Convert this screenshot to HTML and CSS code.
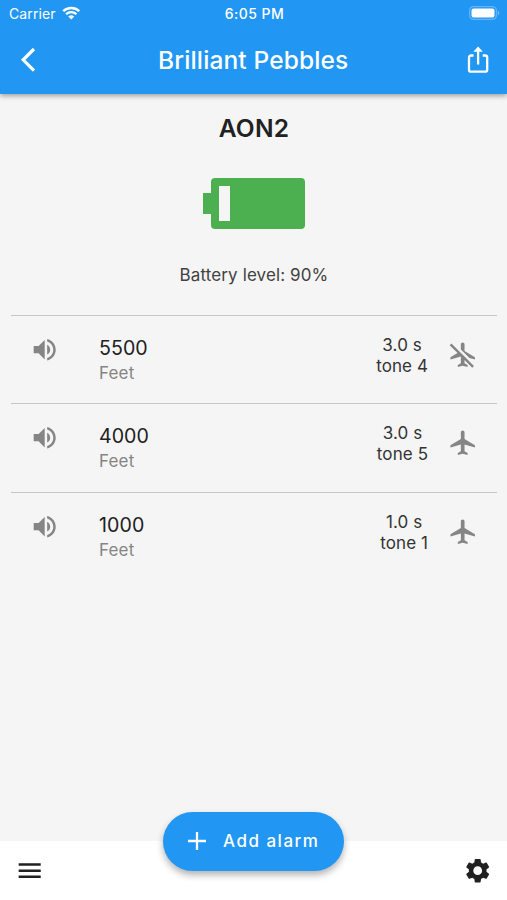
FILE: index.html
```html
<!DOCTYPE html>
<html lang="en">
<head>
    <meta charset="UTF-8">
    <title>Brilliant Pebbles</title>
    <link rel="stylesheet" href="styles.css">
</head>
<body>

<header>
    <div class="status-bar">
        <div class="carrier">
            <span>Carrier</span>
            <svg class="wifi" viewBox="0 0 18 14">
                <path d="M1 5.2a11.5 11.5 0 0 1 16 0" fill="none" stroke="#fff" stroke-width="2.5"/>
                <path d="M3.8 8.2a7.5 7.5 0 0 1 10.4 0" fill="none" stroke="#fff" stroke-width="2.2"/>
                <path d="M9 13.6L6 10.6a4.3 4.3 0 0 1 6 0z" fill="#fff"/>
            </svg>
        </div>
        <div class="time">6:05 PM</div>
        <div class="phone-battery">
            <svg width="31" height="14" viewBox="0 0 31 14">
                <rect x=".6" y=".6" width="26.8" height="12.8" rx="4" fill="none" stroke="#fff" stroke-opacity=".3" stroke-width="1.2"/>
                <rect x="2.5" y="2.5" width="23" height="9" rx="2" fill="#fff"/>
                <path d="M28.8 4.6c2 .8 2 4 0 4.8z" fill="#fff" fill-opacity=".35"/>
            </svg>
        </div>
    </div>
    <div class="app-bar">
        <svg class="back" width="16" height="26" viewBox="0 0 16 26"><path d="M14 2L3.2 12.8 14 23.6" fill="none" stroke="#fff" stroke-width="3.2"/></svg>
        <h1>Brilliant Pebbles</h1>
        <svg class="share" width="22" height="28" viewBox="0 0 22 28">
            <path d="M6.5 9.5H4a2 2 0 0 0-2 2v12.200a2 2 0 0 0 2 2h14.200a2 2 0 0 0 2-2V11.500a2 2 0 0 0-2-2h-2.500M11.100 18.500V3.500" fill="none" stroke="#fff" stroke-width="2.300"/>
            <path d="M6.300 5.700L11.100.5l4.800 5.200z" fill="#fff"/>
        </svg>
    </div>
</header>

<main>
    <div class="device">
        <h2>AON2</h2>
        <div class="battery">
            <div class="battery-tip"></div>
            <div class="battery-body"><div class="battery-empty"></div></div>
        </div>
        <p>Battery level: 90%</p>
    </div>

    <ul class="alarms">
        <li>
            <svg class="icon volume" viewBox="0 0 24 24"><path d="M3 9v6h4l5 5V4L7 9H3zm13.5 3c0-1.77-1.020-3.290-2.500-4.030v8.050c1.480-.730 2.500-2.250 2.500-4.020zM14 3.230v2.060c2.890.860 5 3.540 5 6.710s-2.110 5.850-5 6.710v2.060c4.010-.910 7-4.490 7-8.770s-2.990-7.860-7-8.770z"/></svg>
            <div class="altitude">
                <div class="value">5500</div>
                <div class="unit">Feet</div>
            </div>
            <div class="tone">3.0 s<br>tone 4</div>
            <svg class="icon plane" viewBox="0 0 24 24"><path d="M10.500 7.670V3.500c0-.830.670-1.500 1.500-1.500s1.500.670 1.500 1.500V9l8.500 5v2l-4.490-1.320-7.010-7.010zm9.280 14.940l1.410-1.410-7.690-7.700-3.940-3.940-6.750-6.750-1.420 1.410 6.380 6.380L2 14v2l8.500-2.500V19L8 20.500V22l4-1 4 1v-1.500L13.500 19v-2.670l6.280 6.280z"/></svg>
        </li>
        <li>
            <svg class="icon volume" viewBox="0 0 24 24"><path d="M3 9v6h4l5 5V4L7 9H3zm13.5 3c0-1.77-1.020-3.290-2.500-4.030v8.050c1.480-.730 2.500-2.250 2.500-4.020zM14 3.230v2.060c2.890.860 5 3.540 5 6.710s-2.110 5.850-5 6.710v2.060c4.010-.910 7-4.490 7-8.770s-2.990-7.860-7-8.770z"/></svg>
            <div class="altitude">
                <div class="value">4000</div>
                <div class="unit">Feet</div>
            </div>
            <div class="tone">3.0 s<br>tone 5</div>
            <svg class="icon plane" viewBox="0 0 24 24"><path d="M22 16v-2l-8.500-5V3.500c0-.830-.670-1.500-1.500-1.500s-1.500.670-1.500 1.500V9L2 14v2l8.500-2.500V19L8 20.500V22l4-1 4 1v-1.500L13.500 19v-5.500L22 16z"/></svg>
        </li>
        <li>
            <svg class="icon volume" viewBox="0 0 24 24"><path d="M3 9v6h4l5 5V4L7 9H3zm13.5 3c0-1.77-1.020-3.290-2.500-4.030v8.050c1.480-.730 2.500-2.250 2.500-4.020zM14 3.230v2.060c2.890.860 5 3.540 5 6.710s-2.110 5.850-5 6.710v2.060c4.010-.910 7-4.490 7-8.770s-2.990-7.860-7-8.770z"/></svg>
            <div class="altitude">
                <div class="value">1000</div>
                <div class="unit">Feet</div>
            </div>
            <div class="tone">1.0 s<br>tone 1</div>
            <svg class="icon plane" viewBox="0 0 24 24"><path d="M22 16v-2l-8.500-5V3.500c0-.830-.670-1.500-1.500-1.500s-1.500.670-1.500 1.500V9L2 14v2l8.500-2.500V19L8 20.500V22l4-1 4 1v-1.500L13.500 19v-5.500L22 16z"/></svg>
        </li>
    </ul>
</main>

<footer>
    <svg class="icon" viewBox="0 0 24 24"><path d="M3 18h18v-2H3v2zm0-5h18v-2H3v2zm0-7v2h18V6H3z"/></svg>
    <button class="add-btn">
        <svg width="18" height="18" viewBox="0 0 18 18"><path d="M9 0v18M0 9h18" stroke="#fff" stroke-width="2.300"/></svg>
        <span>Add alarm</span>
    </button>
    <svg class="icon" viewBox="0 0 24 24"><path d="M19.140 12.940c.040-.300.060-.610.060-.940 0-.320-.020-.640-.070-.940l2.030-1.580c.180-.140.230-.410.120-.610l-1.920-3.320c-.120-.220-.370-.290-.590-.220l-2.390.960c-.500-.380-1.030-.700-1.620-.940l-.360-2.540c-.040-.240-.240-.410-.480-.410h-3.840c-.240 0-.430.170-.470.410l-.360 2.540c-.590.240-1.130.570-1.620.940l-2.390-.960c-.220-.080-.470 0-.590.220L2.740 8.870c-.120.210-.080.470.120.610l2.030 1.580c-.050.300-.090.630-.090.940s.020.640.070.940l-2.030 1.580c-.180.140-.230.410-.120.610l1.920 3.320c.120.220.370.290.590.220l2.390-.960c.500.380 1.030.700 1.620.940l.360 2.540c.050.240.240.410.480.410h3.840c.240 0 .440-.170.470-.410l.360-2.540c.590-.240 1.130-.560 1.620-.940l2.390.960c.220.080.470 0 .590-.220l1.920-3.320c.120-.220.070-.470-.120-.610l-2.010-1.580zM12 15.600c-1.980 0-3.600-1.620-3.600-3.600s1.620-3.600 3.600-3.600 3.600 1.620 3.600 3.600-1.620 3.600-3.600 3.600z"/></svg>
</footer>

</body>
</html>
```
FILE: styles.css
```css
* {
    box-sizing: border-box;
}
body {
    font-family: Inter, "Liberation Sans", sans-serif;
    margin: 0;
    height: 900px;
    display: flex;
    flex-direction: column;
    background: #f5f5f5;
    color: #212121;
    overflow: hidden;
}
header {
    height: 94px;
    background: #2196f3;
    color: white;
    box-shadow: 0 2px 5px rgba(0, 0, 0, 0.35);
}
.status-bar {
    height: 26px;
    padding: 0 7px 0 9px;
    display: grid;
    grid-template-columns: 1fr auto 1fr;
    align-items: center;
    font-size: 14px;
}
.carrier {
    display: flex;
    align-items: center;
    gap: 6px;
    letter-spacing: 0.1px;
}
.wifi {
    width: 18.5px;
    height: 14px;
}
.time {
    font-weight: 500;
    letter-spacing: 0.5px;
}
.phone-battery {
    display: flex;
    justify-content: flex-end;
}
.app-bar {
    height: 68px;
    padding: 0 18.5px 0 20px;
    display: flex;
    align-items: center;
    justify-content: space-between;
}
h1 {
    margin: 0 0 0 4px;
    font-size: 24.5px;
    font-weight: 500;
    letter-spacing: 0.13px;
}
main {
    flex: 1;
}
.device {
    height: 221px;
    padding-top: 18px;
    display: flex;
    flex-direction: column;
    align-items: center;
}
h2 {
    margin: 0 0 0 1px;
    font-size: 24.5px;
    line-height: 32px;
    font-weight: 600;
    letter-spacing: 0.2px;
}
.battery {
    display: flex;
    align-items: center;
    margin-top: 34px;
}
.battery-tip {
    width: 8px;
    height: 21px;
    background: #4caf50;
}
.battery-body {
    width: 94px;
    height: 51px;
    padding: 8px;
    border-radius: 4px;
    background: #4caf50;
}
.battery-empty {
    width: 11px;
    height: 35px;
    background: #f5f5f5;
}
.device p {
    margin: 34px 0 0 1px;
    font-size: 17px;
    line-height: 24px;
    letter-spacing: 0.12px;
    color: #424242;
}
.alarms {
    list-style: none;
    margin: 0;
    padding: 0 10px 0 11px;
}
.alarms li {
    height: 88.4px;
    padding: 19px 20px 0 19px;
    display: flex;
    align-items: flex-start;
    border-top: 1px solid #c6c6c6;
}
.icon {
    width: 29.4px;
    height: 29.4px;
    fill: #212121;
}
.volume {
    margin-right: 39.5px;
    fill: #858585;
}
.plane {
    margin: 5px 0 0 19.5px;
    fill: #858585;
}
.altitude {
    flex: 1;
}
.value {
    font-size: 19.6px;
    line-height: 26px;
    letter-spacing: 0.1px;
}
.unit {
    font-size: 17px;
    line-height: 24px;
    letter-spacing: 0.2px;
    color: #858585;
}
.tone {
    font-size: 17px;
    line-height: 21px;
    letter-spacing: 0.1px;
    text-align: center;
    color: #333;
}
footer {
    height: 59px;
    padding: 0 15px;
    display: flex;
    align-items: center;
    justify-content: space-between;
    background: white;
}
.add-btn {
    width: 181px;
    height: 59px;
    margin-top: -59px;
    padding: 0 0 0 25px;
    display: flex;
    align-items: center;
    gap: 17px;
    border: none;
    border-radius: 30px;
    background: #2196f3;
    color: white;
    font-family: inherit;
    font-size: 17px;
    font-weight: 500;
    letter-spacing: 1.5px;
    box-shadow: 0 4px 7px rgba(0, 0, 0, 0.3);
}
```
